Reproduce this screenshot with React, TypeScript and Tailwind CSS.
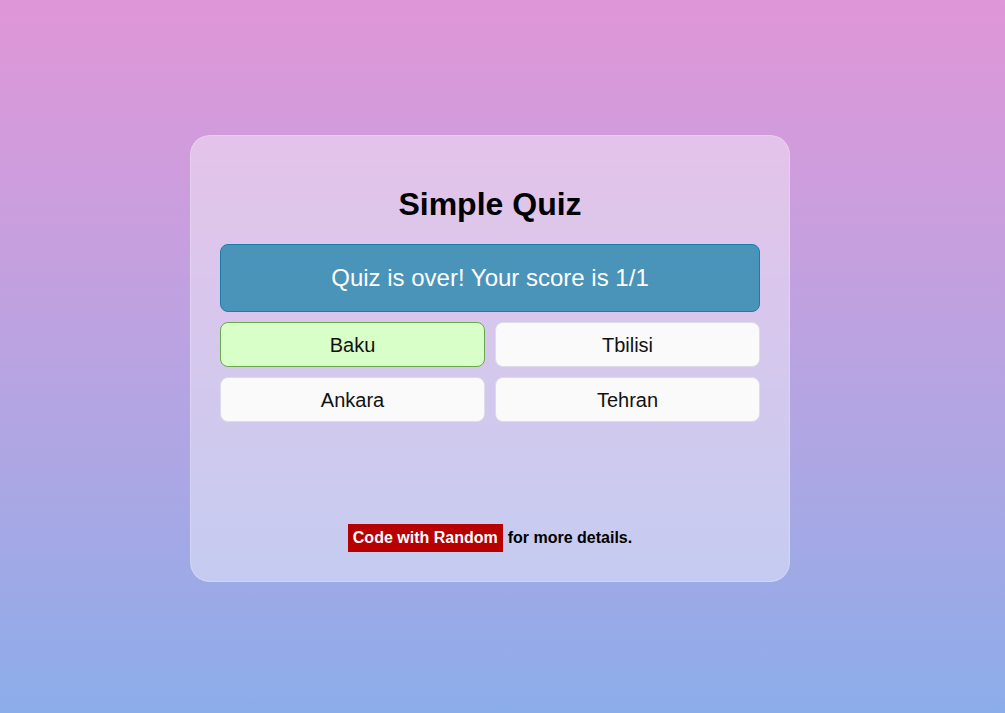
export default function App() {
  const options = [
    { label: 'Baku', correct: true },
    { label: 'Tbilisi', correct: false },
    { label: 'Ankara', correct: false },
    { label: 'Tehran', correct: false },
  ]

  return (
    <div className="min-h-[713px] w-full bg-gradient-to-b from-[#e096d8] to-[#8badea] flex justify-center pt-[135px] pr-[25px] font-['Liberation_Sans',Arial,sans-serif]">
      <div className="w-[600px] h-[447px] bg-white/40 border border-white/20 rounded-[20px] px-[29px] pt-[30px] pb-[29px] flex flex-col">
        <h1 className="text-[32px] leading-[37px] font-bold text-black text-center mt-[20px] mb-[21px]">Simple Quiz</h1>

        {/* Result box */}
        <div className="bg-[#4a93b9] border border-[#1b7ea8] rounded-[8px] h-[68px] flex items-center justify-center text-white text-[24px]">
          Quiz is over! Your score is 1/1
        </div>

        {/* Options */}
        <div className="grid grid-cols-2 gap-[10px] mt-[10px]">
          {options.map((o) => (
            <button
              key={o.label}
              className={
                o.correct
                  ? 'h-[45px] rounded-[8px] border border-[#6aa84f] bg-[#d9ffc9] text-[20px] leading-[22px] text-[#111]'
                  : 'h-[45px] rounded-[8px] border border-[#dddde8] bg-[#fafafa] text-[20px] leading-[22px] text-[#111]'
              }
            >
              {o.label}
            </button>
          ))}
        </div>

        <div className="mt-[102px] flex justify-center items-center text-[16px] font-bold leading-[18px]">
          <span className="bg-[#b90000] text-white px-[5px] py-[5px]">Code with Random</span>
          <span className="ml-[5px] text-black">for more details.</span>
        </div>
      </div>
    </div>
  )
}
